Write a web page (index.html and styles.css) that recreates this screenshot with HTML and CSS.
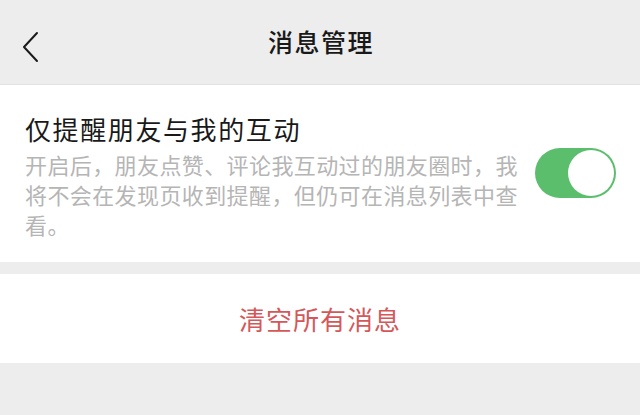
FILE: index.html
```html
<!DOCTYPE html>
<html lang="zh">
<head>
<meta charset="utf-8">
<link rel="stylesheet" href="styles.css">
</head>
<body>
<header class="nav">
  <svg class="back" width="20" height="32" viewBox="0 0 20 32"><path d="M16 2 L3 16 L16 30" fill="none" stroke="#1a1a1a" stroke-width="2" stroke-linecap="round" stroke-linejoin="round"/></svg>
  <h1 class="title">消息管理</h1>
</header>
<section class="card setting">
  <div class="text">
    <div class="label">仅提醒朋友与我的互动</div>
    <div class="desc">开启后，朋友点赞、评论我互动过的朋友圈时，我将不会在发现页收到提醒，但仍可在消息列表中查看。</div>
  </div>
  <div class="toggle"><span class="knob"></span></div>
</section>
<section class="card clear">
  <span class="danger">清空所有消息</span>
</section>
</body>
</html>
```
FILE: styles.css
```css
html, body {
  margin: 0;
  padding: 0;
  background: #ededed;
  font-family: "Noto Sans CJK SC", "Noto Sans", sans-serif;
}
.nav {
  height: 85px;
  display: flex;
  align-items: center;
  justify-content: center;
  position: relative;
  border-bottom: 1px solid #e2e2e2;
  box-sizing: border-box;
}
.back {
  position: absolute;
  left: 21px;
  top: 31px;
}
.title {
  margin: 0;
  font-size: 25px;
  font-weight: 500;
  color: #191919;
  letter-spacing: 1.5px;
  margin-top: -2px;
  padding-left: 2px;
}
.card {
  background: #fff;
}
.setting {
  display: flex;
  align-items: flex-start;
  padding: 26px 24px 0 25px;
  height: 177px;
  box-sizing: border-box;
}
.text {
  width: 498px;
  flex: none;
}
.label {
  font-size: 26px;
  color: #191919;
  line-height: 36px;
  letter-spacing: 1.6px;
}
.desc {
  font-size: 22px;
  line-height: 30px;
  color: #b5b5b5;
  margin-top: 2px;
  letter-spacing: 0.4px;
}
.toggle {
  width: 81px;
  height: 50px;
  border-radius: 25px;
  background: #5bbe6c;
  position: relative;
  flex: none;
  margin-left: auto;
  margin-top: 37px;
}
.knob {
  position: absolute;
  right: 2px;
  top: 2px;
  width: 46px;
  height: 46px;
  border-radius: 50%;
  background: #fff;
}
.clear {
  margin-top: 12px;
  height: 89px;
  display: flex;
  align-items: center;
  justify-content: center;
}
.danger {
  font-size: 26px;
  color: #d4585a;
  letter-spacing: 1px;
}
```
